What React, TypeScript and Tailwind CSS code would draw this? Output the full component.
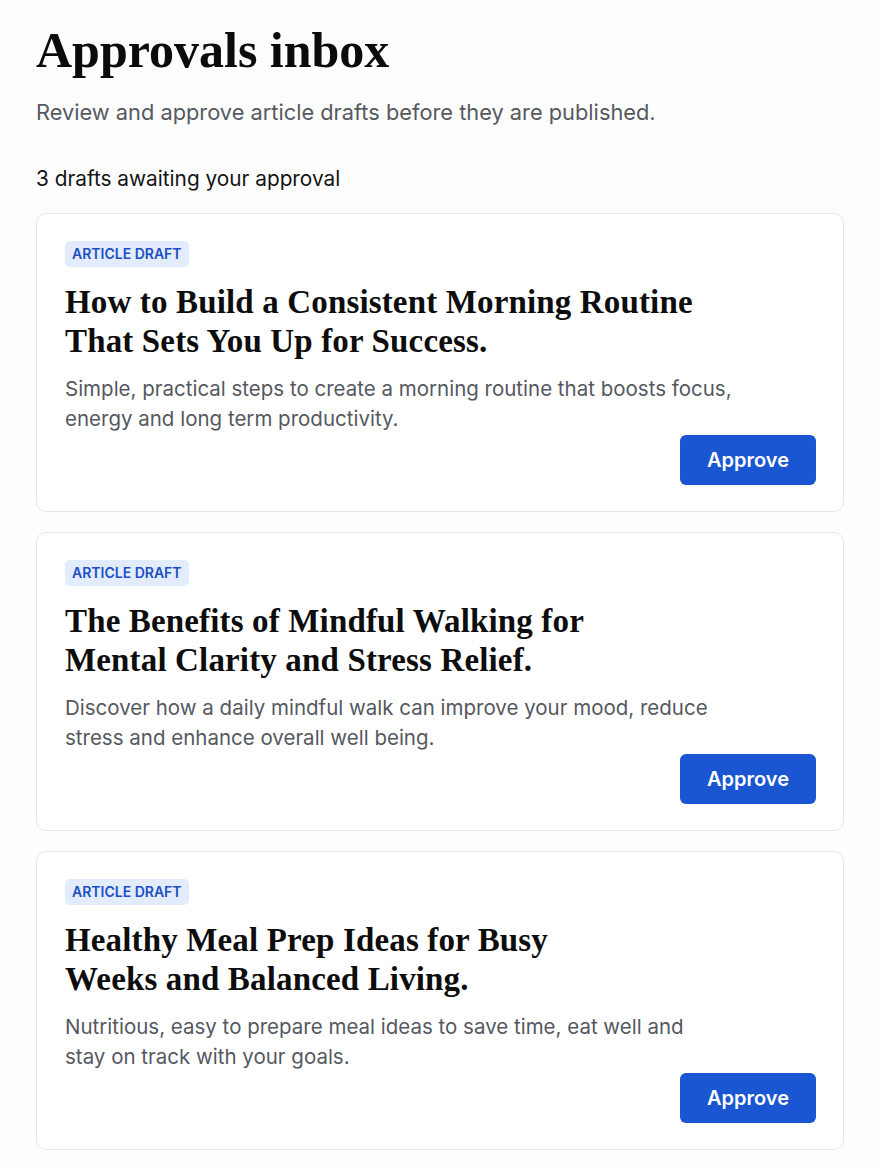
const drafts = [
  {
    title: ["How to Build a Consistent Morning Routine", "That Sets You Up for Success."],
    summary: [
      "Simple, practical steps to create a morning routine that boosts focus,",
      "energy and long term productivity.",
    ],
  },
  {
    title: ["The Benefits of Mindful Walking for", "Mental Clarity and Stress Relief."],
    summary: [
      "Discover how a daily mindful walk can improve your mood, reduce",
      "stress and enhance overall well being.",
    ],
  },
  {
    title: ["Healthy Meal Prep Ideas for Busy", "Weeks and Balanced Living."],
    summary: [
      "Nutritious, easy to prepare meal ideas to save time, eat well and",
      "stay on track with your goals.",
    ],
  },
];

const sans = "font-['Inter','Liberation_Sans',sans-serif]";
const serif = "font-['Liberation_Serif','Times_New_Roman',serif]";

function DraftCard({ title, summary }: { title: string[]; summary: string[] }) {
  return (
    <div className="rounded-[10px] border border-[#e4e6ea] bg-white pl-[28px] pr-[27px] pt-[27px] pb-[26px]">
      <span className={`inline-block rounded-[5px] bg-[#e2ecfc] px-[7px] py-[3px] text-[14px] font-semibold leading-[20px] text-[#1b4fc4] ${sans}`}>
        ARTICLE DRAFT
      </span>
      <h2 className={`mt-[16px] text-[33px] font-bold leading-[39px] tracking-[0.15px] text-[#0d0d0d] ${serif}`}>
        {title[0]}
        <br />
        {title[1]}
      </h2>
      <p className={`mt-[13px] text-[20.5px] leading-[30px] text-[#55585f] ${sans}`}>
        {summary[0]}
        <br />
        {summary[1]}
      </p>
      <div className="mt-[1px] flex justify-end">
        <button className={`h-[50px] w-[136px] rounded-[6px] bg-[#1a56d2] text-[20px] font-semibold text-white ${sans}`}>
          Approve
        </button>
      </div>
    </div>
  );
}

export default function App() {
  return (
    <div className="min-h-screen bg-[#fdfdfd] px-9 pt-[22px] pb-6">
      <h1 className={`text-[50px] font-bold leading-[56px] text-[#0b0b0b] ${serif}`}>
        Approvals inbox
      </h1>
      <p className={`mt-[19px] text-[21.8px] leading-[30px] text-[#56595f] ${sans}`}>
        Review and approve article drafts before they are published.
      </p>
      <p className={`mt-[38px] text-[20.8px] leading-[28px] text-[#141414] ${sans}`}>
        3 drafts awaiting your approval
      </p>
      <div className="mt-[20px] flex flex-col gap-[20px]">
        {drafts.map((d) => (
          <DraftCard key={d.title[0]} title={d.title} summary={d.summary} />
        ))}
      </div>
    </div>
  );
}
